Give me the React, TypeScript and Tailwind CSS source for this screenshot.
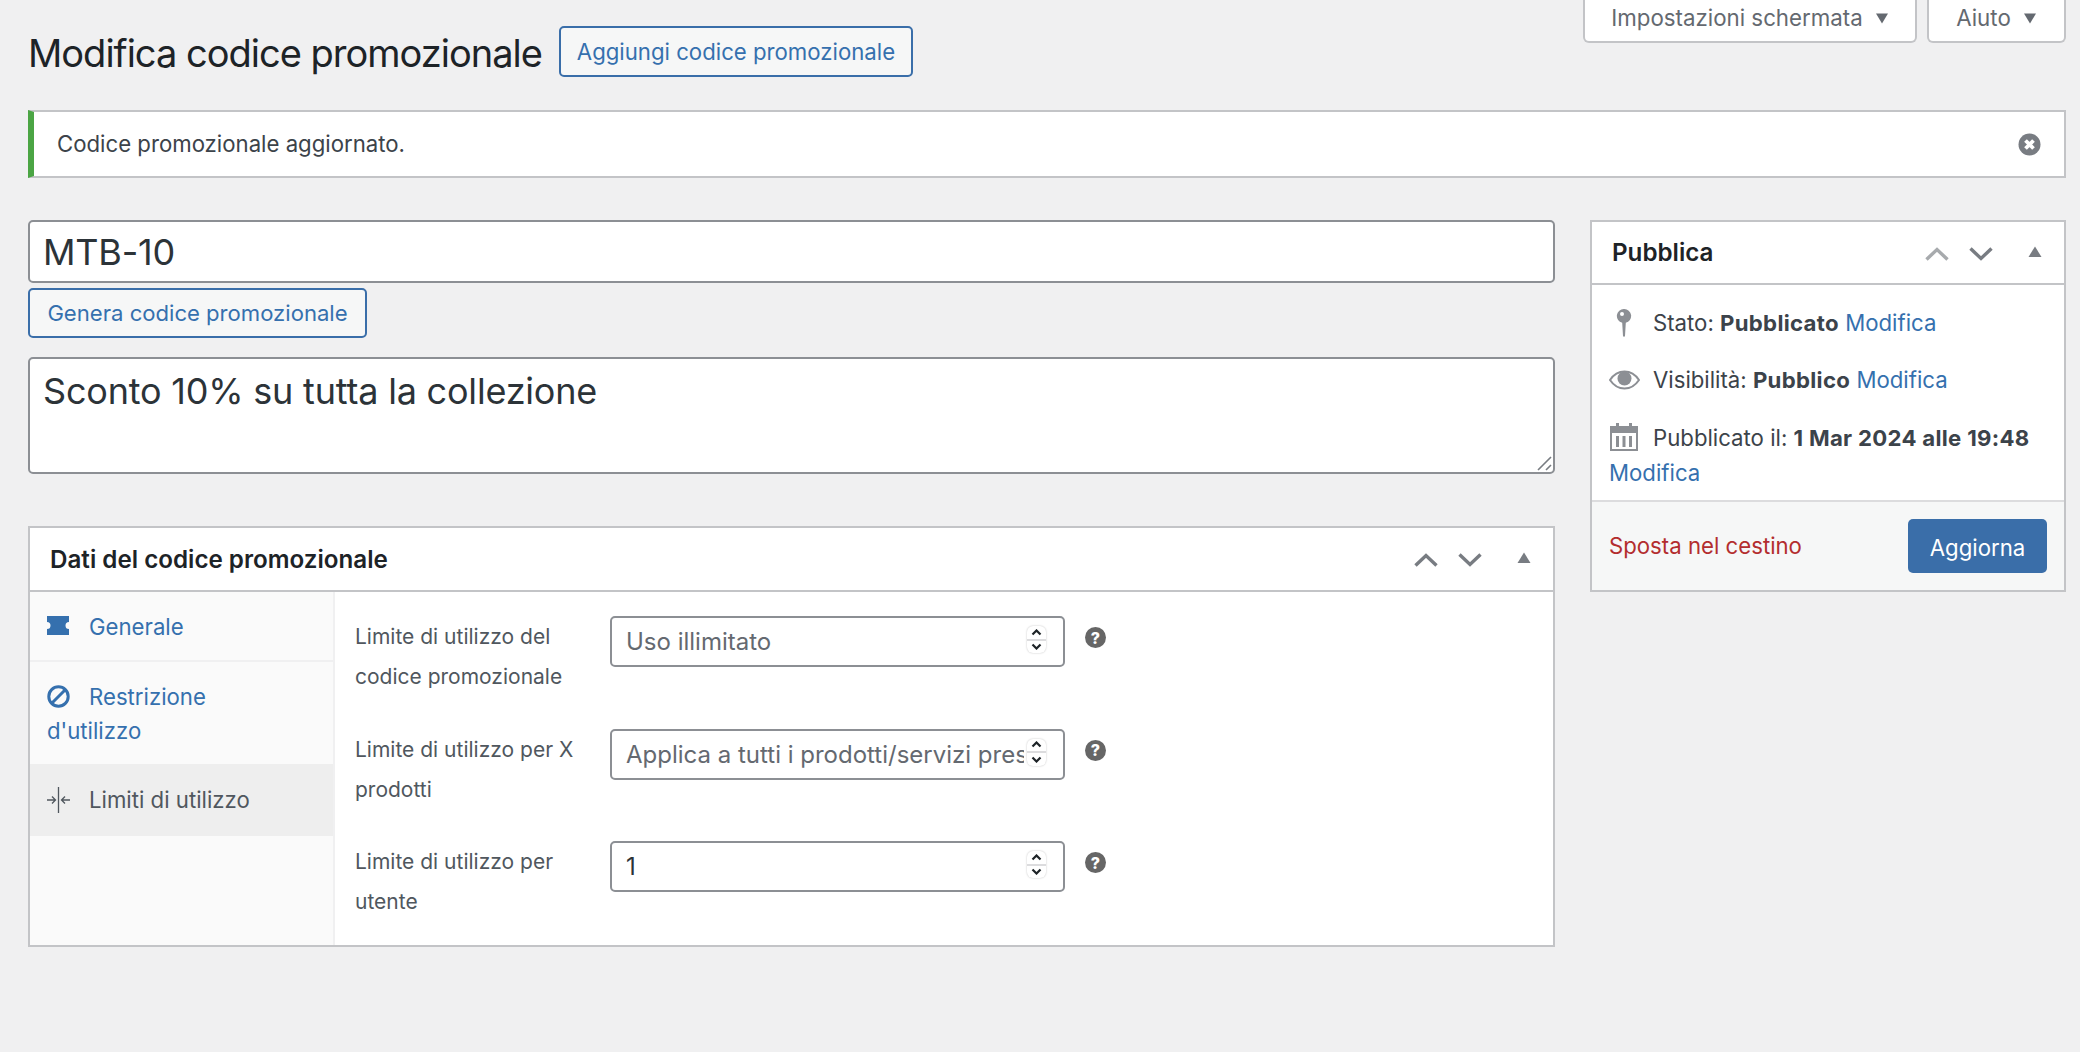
function Chevron({ up, light }: { up?: boolean; light?: boolean }) {
  return (
    <svg width="24" height="16" viewBox="0 0 24 16" className={light ? 'text-[#a7aaad]' : 'text-[#787c82]'}>
      <path
        d={up ? 'M1.5 13.5 12 3.5l10.500 10' : 'M1.5 2.5 12 12.500l10.500-10'}
        fill="none"
        stroke="currentColor"
        strokeWidth="3.4"
      />
    </svg>
  );
}

function PostboxHeader({ title, upLight, tall }: { title: string; upLight?: boolean; tall?: boolean }) {
  return (
    <div className={`flex items-center border-b-2 border-[#c3c4c7] pt-[2px] pr-[22px] pl-[20px] ${tall ? 'h-[64px]' : 'h-[63px]'}`}>
      <h2 className="flex-1 text-[24.2px] leading-none font-semibold text-[#1d2327]">{title}</h2>
      <div className="flex items-center gap-5">
        <Chevron up light={upLight} />
        <Chevron />
      </div>
      <svg width="14" height="12" viewBox="0 0 14 12" className="mb-1 ml-[35px] text-[#787c82]">
        <path d="M7 0.5 13.500 11H0.500z" fill="currentColor" />
      </svg>
    </div>
  );
}

function Stepper() {
  return (
    <div className="absolute top-[10px] right-[19px] flex h-[27px] w-[19px] flex-col overflow-hidden rounded-[6px] bg-white shadow-[0_0_2px_rgba(0,0,0,0.25)]">
      <div className="flex flex-1 items-center justify-center border-b-2 border-[#dcdcde]">
        <svg width="11" height="7" viewBox="0 0 11 7">
          <path d="M1.500 5.500 5.500 1.500l4 4" fill="none" stroke="#1d2327" strokeWidth="2.200" />
        </svg>
      </div>
      <div className="flex flex-1 items-center justify-center">
        <svg width="11" height="7" viewBox="0 0 11 7">
          <path d="M1.500 1.500 5.500 5.500l4-4" fill="none" stroke="#1d2327" strokeWidth="2.200" />
        </svg>
      </div>
    </div>
  );
}

function HelpTip() {
  return (
    <span className="mt-[11px] ml-[20px] flex size-[21px] items-center justify-center rounded-full bg-[#666] text-[16px] leading-none font-extrabold text-white">
      ?
    </span>
  );
}

function LimitRow({ line1, line2, placeholder, value }: { line1: string; line2: string; placeholder?: string; value?: string }) {
  return (
    <div className="flex h-[112.500px] items-start">
      <label className="w-[255px] pt-[1px] text-[21px] leading-[40px] text-[#50575e]">
        {line1}
        <br />
        {line2}
      </label>
      <div className="relative h-[51px] w-[455px]">
        <input
          readOnly
          value={value}
          placeholder={placeholder}
          className="h-full w-full rounded-[5px] border-2 border-[#8c8f94] bg-white pr-[39px] pl-[14px] text-[24px] text-[#2c3338] placeholder:text-[#646970]"
        />
        <Stepper />
      </div>
      <HelpTip />
    </div>
  );
}

export default function App() {
  return (
    <div className="h-[1052px] w-[2080px] overflow-hidden bg-[#f0f0f1] font-[Inter,sans-serif] text-[#3c434a]">
      <div className="flex items-start justify-between pr-[14px] pl-[28px]">
        <div className="mt-[26px] flex items-center">
          <h1 className="mt-[3px] mr-[17px] text-[38px] leading-none font-normal tracking-[-1px] text-[#1d2327]">Modifica codice promozionale</h1>
          <a className="flex h-[51px] items-center rounded-[5px] border-2 border-[#3a6ea9] bg-[#f6f7f7] px-[16px] pt-[1px] text-[22.200px] text-[#3570ae]">
            Aggiungi codice promozionale
          </a>
        </div>
        <div className="flex gap-[10px]">
          <div className="flex h-[43px] w-[334px] items-center justify-center gap-[12px] rounded-b-[6px] border-x-2 border-b-2 border-[#c3c4c7] bg-white pb-[5px] text-[22.300px] text-[#646970]">
            Impostazioni schermata
            <svg width="14" height="11" viewBox="0 0 14 11"><path d="M1 0.500h12L7 10.500z" fill="#646970" /></svg>
          </div>
          <div className="flex h-[43px] w-[139px] items-center justify-center gap-[12px] rounded-b-[6px] border-x-2 border-b-2 border-[#c3c4c7] bg-white pb-[5px] text-[22.300px] text-[#646970]">
            Aiuto
            <svg width="14" height="11" viewBox="0 0 14 11"><path d="M1 0.500h12L7 10.500z" fill="#646970" /></svg>
          </div>
        </div>
      </div>

      <div className="mt-[33px] mr-[14px] ml-[28px] flex h-[68px] items-center justify-between border-y-2 border-r-2 border-l-[6px] border-y-[#c3c4c7] border-r-[#c3c4c7] border-l-[#4ba544] bg-white pr-[23px] pl-[23px]">
        <p className="text-[22.200px] text-[#3c434a]">Codice promozionale aggiornato.</p>
        <svg width="23" height="23" viewBox="0 0 23 23">
          <circle cx="11.500" cy="11.500" r="11" fill="#787c82" />
          <path d="M7.500 7.500l8 8M15.500 7.500l-8 8" stroke="#fff" strokeWidth="3.800" />
        </svg>
      </div>

      <div className="mt-[42px] flex items-start gap-[35px] pr-[14px] pl-[28px]">
        <div className="w-[1527px]">
          <input
            readOnly
            value="MTB-10"
            className="block h-[63px] w-full rounded-[5px] border-2 border-[#8c8f94] bg-white px-[13px] text-[36px] tracking-[-0.2px] text-[#2c3338]"
          />
          <a className="mt-[5px] flex h-[50px] w-[339px] items-center justify-center rounded-[5px] border-2 border-[#3a6ea9] bg-[#f6f7f7] pt-[2px] text-[22.100px] text-[#3570ae]">
            Genera codice promozionale
          </a>
          <div className="relative mt-[19px] h-[117px]">
            <textarea
              readOnly
              value="Sconto 10% su tutta la collezione"
              className="block h-full w-full resize-none rounded-[5px] border-2 border-[#8c8f94] bg-white px-[13px] pt-[9px] text-[36px] leading-[46px] tracking-[-0.2px] text-[#2c3338]"
            />
            <svg width="15" height="15" viewBox="0 0 15 15" className="absolute right-[3px] bottom-[3px] text-[#787c82]">
              <path d="M1 14 14 1M9 14 14 9" stroke="currentColor" strokeWidth="1.600" />
            </svg>
          </div>

          <div className="mt-[52px] border-2 border-[#c3c4c7] bg-white">
            <PostboxHeader title="Dati del codice promozionale" tall />
            <div className="flex h-[353px]">
              <ul className="w-[305px] shrink-0 border-r-2 border-[#f0f0f1] bg-[#fafafa] text-[22.200px] text-[#3570ae]">
                <li className="h-[70px] border-b-2 border-[#f0f0f1] px-[17px] pt-[18px] leading-[34px]">
                  <svg width="22" height="19" viewBox="0 0 22 19" className="mr-[20px] mb-[6px] inline-block">
                    <path d="M0 0h22v6a3.500 3.500 0 0 0 0 7v6H0v-6a3.500 3.500 0 0 0 0-7z" fill="currentColor" />
                  </svg>
                  Generale
                </li>
                <li className="h-[102px] px-[17px] pt-[18px] leading-[34px]">
                  <svg width="23" height="23" viewBox="0 0 23 23" className="mr-[19px] mb-[4px] inline-block">
                    <circle cx="11.500" cy="11.500" r="9.700" fill="none" stroke="currentColor" strokeWidth="3" />
                    <path d="M5 18 18 5" stroke="currentColor" strokeWidth="3" />
                  </svg>
                  Restrizione
                  <br />
                  d'utilizzo
                </li>
                <li className="h-[72px] bg-[#eee] px-[17px] pt-[19px] leading-[34px] text-[#50575e]">
                  <svg width="23" height="26" viewBox="0 0 23 26" className="mr-[19px] mb-[4px] inline-block">
                    <path d="M11.500 0v26M0 13h8M5 9.500 8.500 13 5 16.500M23 13h-8M18 9.500 14.500 13 18 16.500" fill="none" stroke="currentColor" strokeWidth="1.300" />
                  </svg>
                  Limiti di utilizzo
                </li>
              </ul>
              <div className="pt-[24px] pl-[20px]">
                <LimitRow line1="Limite di utilizzo del" line2="codice promozionale" placeholder="Uso illimitato" />
                <LimitRow line1="Limite di utilizzo per X" line2="prodotti" placeholder="Applica a tutti i prodotti/servizi presenti" />
                <LimitRow line1="Limite di utilizzo per" line2="utente" value="1" />
              </div>
            </div>
          </div>
        </div>

        <aside className="w-[476px] border-2 border-[#c3c4c7] bg-white">
          <PostboxHeader title="Pubblica" upLight />
          <div className="px-[17px] pt-[21px] text-[22.200px] text-[#3c434a]">
            <div className="flex h-[34px] items-center">
              <svg width="16" height="28" viewBox="0 0 16 28" className="mr-[21px] ml-[7px] text-[#8c8f94]">
                <path d="M8 0a7 7 0 0 1 1.800 13.800L9 27l-1 1-1-1-.800-13.200A7 7 0 0 1 8 0z" fill="currentColor" />
                <circle cx="6" cy="5" r="2" fill="#fff" />
              </svg>
              <span>
                Stato: <b className="font-bold tracking-[0.3px]">Pubblicato</b> <a className="text-[#3570ae]">Modifica</a>
              </span>
            </div>
            <div className="mt-[23px] flex h-[34px] items-center">
              <svg width="31" height="20" viewBox="0 0 31 20" className="mr-[13px] text-[#8c8f94]">
                <path d="M1 10C5 4 10 1.500 15.500 1.500S26 4 30 10c-4 6-9 8.500-14.500 8.500S5 16 1 10z" fill="none" stroke="currentColor" strokeWidth="2" />
                <circle cx="15.500" cy="8.500" r="7" fill="currentColor" />
              </svg>
              <span>
                Visibilità: <b className="font-bold tracking-[0.3px]">Pubblico</b> <a className="text-[#3570ae]">Modifica</a>
              </span>
            </div>
            <div className="mt-[24px] leading-[34px]">
              <svg width="28" height="28" viewBox="0 0 28 28" className="mr-[15px] mb-[5px] ml-[1px] inline-block text-[#8c8f94]">
                <path d="M1 4h26v23H1z" fill="none" stroke="currentColor" strokeWidth="2" />
                <path d="M1 4h26v6H1zM6 0h3v6H6zM19 0h3v6h-3zM6 13h3v11H6zM12.500 13h3v11h-3zM19 13h3v11h-3z" fill="currentColor" />
              </svg>
              Pubblicato il: <b className="font-bold tracking-[0.3px]">1 Mar 2024 alle 19:48</b> <a className="text-[#3570ae]">Modifica</a>
            </div>
          </div>
          <div className="mt-[10px] flex h-[90px] items-center justify-between border-t-2 border-[#dcdcde] bg-[#f6f7f7] pr-[17px] pl-[17px]">
            <a className="mb-[2px] text-[22.200px] text-[#b32d2e]">Sposta nel cestino</a>
            <button className="h-[54px] w-[139px] rounded-[5px] bg-[#3a6ea9] pt-[2px] text-[22.200px] text-white">Aggiorna</button>
          </div>
        </aside>
      </div>
    </div>
  );
}
